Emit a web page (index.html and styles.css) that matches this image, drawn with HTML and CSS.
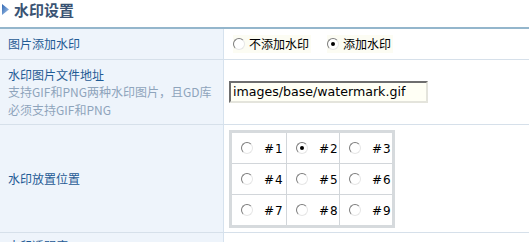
FILE: index.html
```html
<!DOCTYPE html>
<html lang="zh-CN">
<head>
<meta charset="utf-8">
<title>水印设置</title>
<link rel="stylesheet" href="styles.css">
</head>
<body>
<div class="title">
  <svg class="tri" width="7" height="11" viewBox="0 0 7 11">
    <defs>
      <linearGradient id="g" x1="0" y1="0" x2="1" y2="1">
        <stop offset="0" stop-color="#2f66b3"/>
        <stop offset="1" stop-color="#a9c8ea"/>
      </linearGradient>
    </defs>
    <polygon points="0,0 7,5.5 0,11" fill="url(#g)"/>
  </svg>
  <h2 class="title-text">水印设置</h2>
</div>
<div class="form">
  <div class="cell label row1"><span class="name">图片添加水印</span></div>
  <div class="cell value row1">
    <label class="opt"><span class="radio"></span><span class="opt-text">不添加水印</span></label>
    <label class="opt opt-second"><span class="radio checked"></span><span class="opt-text">添加水印</span></label>
  </div>

  <div class="cell label row2">
    <div class="lines">
      <span class="name">水印图片文件地址</span>
      <span class="hint">支持GIF和PNG两种水印图片，且GD库</span>
      <span class="hint">必须支持GIF和PNG</span>
    </div>
  </div>
  <div class="cell value row2">
    <div class="textbox">images/base/watermark.gif</div>
  </div>

  <div class="cell label row3"><span class="name">水印放置位置</span></div>
  <div class="cell value row3 top">
    <div class="pos-grid">
      <div class="pos"><span class="radio"></span><span class="pos-text">#1</span></div>
      <div class="pos"><span class="radio checked"></span><span class="pos-text">#2</span></div>
      <div class="pos"><span class="radio"></span><span class="pos-text">#3</span></div>
      <div class="pos"><span class="radio"></span><span class="pos-text">#4</span></div>
      <div class="pos"><span class="radio"></span><span class="pos-text">#5</span></div>
      <div class="pos"><span class="radio"></span><span class="pos-text">#6</span></div>
      <div class="pos"><span class="radio"></span><span class="pos-text">#7</span></div>
      <div class="pos"><span class="radio"></span><span class="pos-text">#8</span></div>
      <div class="pos"><span class="radio"></span><span class="pos-text">#9</span></div>
    </div>
  </div>

  <div class="cell label row4"><span class="name">水印透明度</span></div>
  <div class="cell value row4"></div>
</div>
</body>
</html>
```

FILE: styles.css
```css
html, body {
  margin: 0;
  padding: 0;
  overflow: hidden;
  background: #ffffff;
}

body {
  font-family: "Noto Sans CJK SC", "DejaVu Sans", sans-serif;
  font-size: 12px;
  color: #000;
}

.title {
  height: 27px;
  display: flex;
  align-items: flex-start;
  padding-left: 2px;
  box-sizing: border-box;
}

.tri {
  margin-top: 4px;
  flex: none;
}

.title-text {
  margin: 0 0 0 5px;
  font-size: 15px;
  line-height: 20px;
  font-weight: bold;
  color: #3a5373;
}

.form {
  display: grid;
  grid-template-columns: 224px 1fr;
  border-top: 2px solid #94b6cc;
}

.cell {
  box-sizing: border-box;
  border-bottom: 1px solid #d6e0ea;
  display: flex;
  align-items: center;
}

.label {
  background: #eef4fb;
  border-right: 1px solid #d6e2ee;
  padding-left: 8px;
}

.value {
  background: #ffffff;
  padding-left: 5px;
}

.row1 { height: 31px; }
.row2 { height: 65px; }
.row3 { height: 108px; }
.row4 { height: 40px; align-items: flex-start; padding-top: 4px; }

.value.top {
  align-items: flex-start;
  padding-top: 5px;
}

.name {
  color: #1f5b95;
  line-height: 17.5px;
}

.hint {
  color: #8ea4bc;
  line-height: 17.5px;
}

.lines {
  display: flex;
  flex-direction: column;
}

.opt {
  display: inline-flex;
  align-items: center;
  background: #fcfcf3;
  margin-left: 4px;
  padding-right: 2px;
}

.opt-second {
  margin-left: 16px;
}

.opt-text {
  margin-left: 4px;
  line-height: 18px;
}

.radio {
  display: inline-block;
  position: relative;
  width: 12px;
  height: 12px;
  box-sizing: border-box;
  border-radius: 50%;
  border: 1px solid;
  border-color: #7c7c7c #e6e6e6 #e6e6e6 #7c7c7c;
  background: #ffffff;
  flex: none;
}

.radio.checked::after {
  content: "";
  position: absolute;
  left: 3px;
  top: 3px;
  width: 4px;
  height: 4px;
  border-radius: 50%;
  background: #000;
}

.textbox {
  width: 199px;
  height: 22px;
  box-sizing: border-box;
  border: 2px solid;
  border-color: #6e6e6e #e4e4dc #e4e4dc #6e6e6e;
  background: #fffff5;
  padding-left: 2px;
  font-family: "DejaVu Sans", sans-serif;
  font-size: 12.6px;
  line-height: 18px;
  color: #000;
}

.pos-grid {
  display: grid;
  grid-template-columns: 54px 52px 52px;
  grid-auto-rows: 30px;
  gap: 1px;
  background: #d2d6da;
  border: 3px solid #d6dadd;
}

.pos {
  background: #ffffff;
  display: flex;
  align-items: center;
  padding-left: 9px;
}

.pos-text {
  margin-left: 11px;
  font-family: "DejaVu Sans", sans-serif;
  font-size: 12px;
  letter-spacing: 1px;
  padding-top: 2px;
  color: #000;
}
```
